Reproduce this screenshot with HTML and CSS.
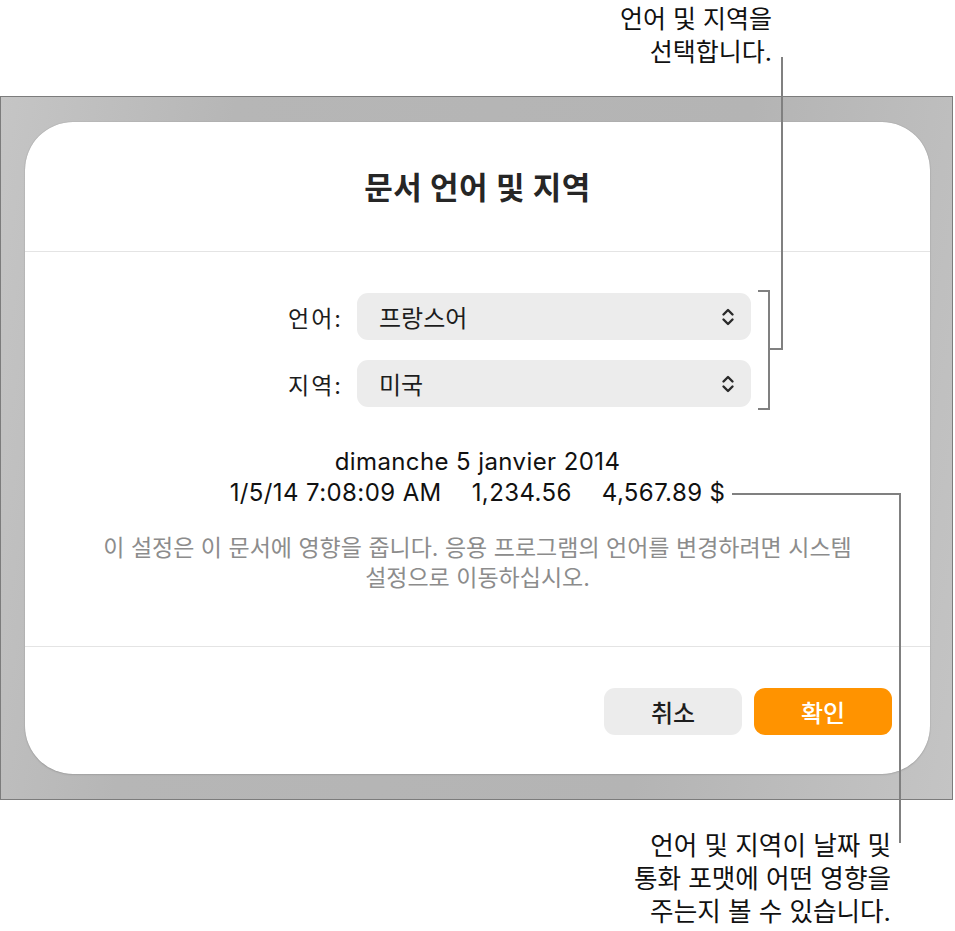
FILE: index.html
```html
<!DOCTYPE html>
<html lang="ko">
<head>
<meta charset="utf-8">
<title>문서 언어 및 지역</title>
<link rel="stylesheet" href="styles.css">
</head>
<body>
<div class="page">
  <p class="note note-top">언어 및 지역을<br>선택합니다.</p>

  <div class="frame">
    <section class="dialog">
      <header class="dialog-head">
        <h1 class="dialog-title">문서 언어 및 지역</h1>
      </header>

      <div class="dialog-body">
        <div class="form">
          <label class="form-label">언어:</label>
          <div class="select">
            <span class="select-value">프랑스어</span>
            <svg class="select-arrows" viewBox="0 0 16 20" aria-hidden="true">
              <path d="M3.5 7.5 L8 3 L12.5 7.5 M3.5 12.5 L8 17 L12.5 12.5"/>
            </svg>
          </div>
          <label class="form-label">지역:</label>
          <div class="select">
            <span class="select-value">미국</span>
            <svg class="select-arrows" viewBox="0 0 16 20" aria-hidden="true">
              <path d="M3.5 7.5 L8 3 L12.5 7.5 M3.5 12.5 L8 17 L12.5 12.5"/>
            </svg>
          </div>
        </div>

        <div class="preview">
          <div>dimanche 5 janvier 2014</div>
          <div class="preview-row">
            <span>1/5/14 7:08:09 AM</span>
            <span>1,234.56</span>
            <span>4,567.89 $</span>
          </div>
        </div>

        <p class="hint">이 설정은 이 문서에 영향을 줍니다. 응용 프로그램의 언어를 변경하려면 시스템<br>설정으로 이동하십시오.</p>
      </div>

      <footer class="dialog-foot">
        <button class="btn btn-cancel" type="button">취소</button>
        <button class="btn btn-ok" type="button">확인</button>
      </footer>
    </section>
  </div>

  <p class="note note-bottom">언어 및 지역이 날짜 및<br>통화 포맷에 어떤 영향을<br>주는지 볼 수 있습니다.</p>

  <!-- leader lines from the notes to the controls they describe -->
  <svg class="leaders" width="955" height="931" viewBox="0 0 955 931" aria-hidden="true">
    <path d="M782 57 V349 H769 M758 291 H769 V409 H758"/>
    <path d="M732 494 H900 V843"/>
  </svg>
</div>
</body>
</html>
```

FILE: styles.css
```css
* {
  box-sizing: border-box;
}

html, body {
  margin: 0;
  padding: 0;
  background: #ffffff;
}

body {
  font-family: Inter, "Noto Sans CJK KR", sans-serif;
  color: #1d1d1f;
}

.page {
  position: relative;
  width: 955px;
  height: 931px;
  overflow: hidden;
}

/* annotation text */
.note {
  margin: 0;
  font-size: 25px;
  line-height: 33px;
  text-align: right;
  color: #111111;
}

.note-top {
  height: 96px;
  padding: 3px 183px 0 0;
}

.note-bottom {
  font-size: 25.6px;
  padding: 29px 64px 0 0;
}

.leaders {
  position: absolute;
  left: 0;
  top: 0;
  pointer-events: none;
}

.leaders path {
  fill: none;
  stroke: #808080;
  stroke-width: 2;
}

/* grey window backdrop */
.frame {
  width: 953px;
  height: 704px;
  border: 1px solid #7c7c7c;
  padding: 25px 22px 24px 24px;
  background: linear-gradient(100deg, #c5c5c5 0%, #b6b6b6 22%, #b4b4b4 70%, #c4c4c4 100%);
}

.dialog {
  height: 652px;
  background: #ffffff;
  border-radius: 48px;
  box-shadow: 0 0 1px rgba(0, 0, 0, 0.3), 0 1px 2px rgba(0, 0, 0, 0.1);
  display: flex;
  flex-direction: column;
}

.dialog-head {
  height: 130px;
  display: flex;
  align-items: center;
  justify-content: center;
  border-bottom: 1px solid #e4e4e4;
}

.dialog-title {
  margin: 0;
  font-size: 31px;
  font-weight: 700;
  letter-spacing: 0.5px;
  color: #262626;
  padding-bottom: 2px;
}

.dialog-body {
  height: 395px;
  padding-top: 41px;
  border-bottom: 1px solid #e4e4e4;
}

.form {
  display: grid;
  grid-template-columns: 1fr 394px;
  column-gap: 13px;
  row-gap: 20px;
  padding-right: 179px;
  align-items: center;
}

.form-label {
  text-align: right;
  font-size: 23px;
  letter-spacing: 2px;
  color: #1d1d1d;
  padding-right: 1px;
}

.select {
  height: 47px;
  border-radius: 11px;
  background: #ececec;
  display: flex;
  align-items: center;
  justify-content: space-between;
  padding: 0 15px 0 22px;
}

.select-value {
  font-size: 24px;
  color: #1d1d1d;
}

.select-arrows {
  width: 16px;
  height: 20px;
}

.select-arrows path {
  fill: none;
  stroke: #2a2a2a;
  stroke-width: 2.4;
  stroke-linecap: round;
  stroke-linejoin: round;
}

.preview {
  margin-top: 39px;
  text-align: center;
  font-size: 24px;
  letter-spacing: 0.4px;
  line-height: 31px;
  color: #111111;
}

.preview-row {
  display: flex;
  justify-content: center;
  gap: 30px;
}

.hint {
  margin: 25px 0 0;
  text-align: center;
  font-size: 23px;
  line-height: 30px;
  color: #8c8c8c;
}

.dialog-foot {
  flex: 1;
  display: flex;
  justify-content: flex-end;
  align-items: flex-start;
  gap: 12px;
  padding: 41px 38px 0 0;
}

.btn {
  width: 138px;
  height: 47px;
  border: none;
  border-radius: 11px;
  font-family: inherit;
  font-size: 24px;
  font-weight: 500;
  cursor: pointer;
}

.btn-cancel {
  background: #ececec;
  color: #1d1d1d;
}

.btn-ok {
  background: #ff9300;
  color: #ffffff;
}
```
